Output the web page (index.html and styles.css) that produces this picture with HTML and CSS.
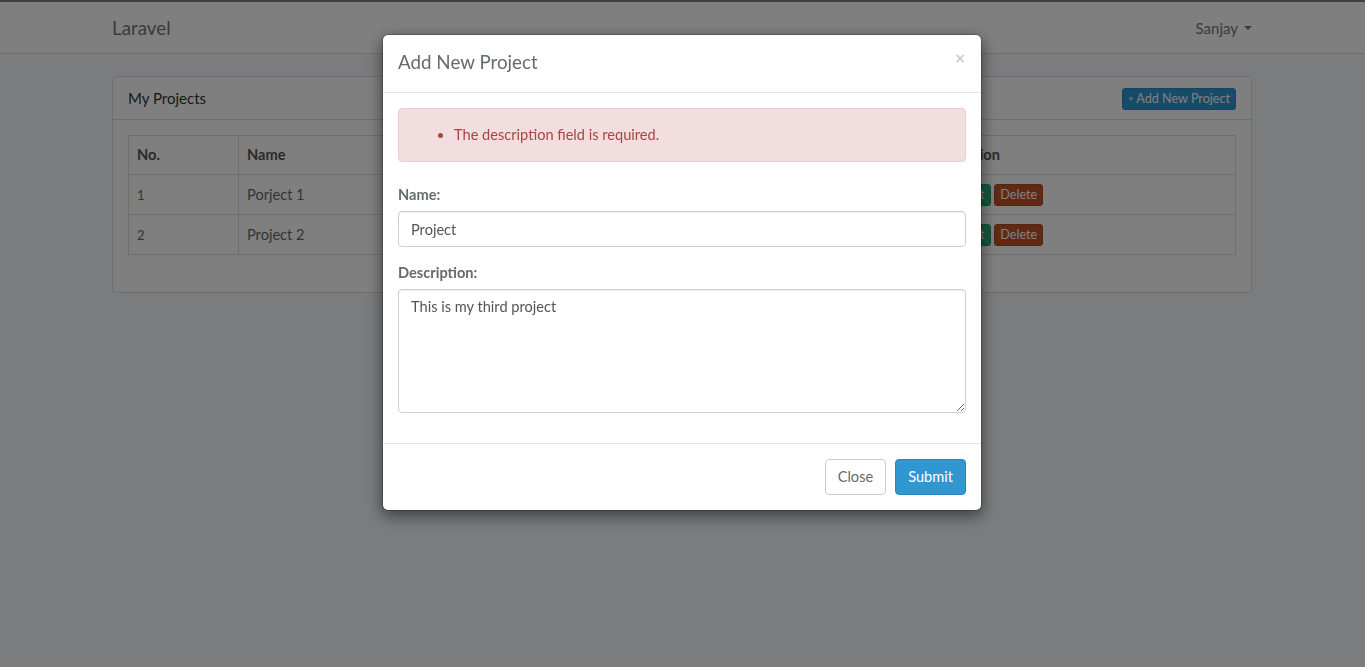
FILE: index.html
```html
<!DOCTYPE html>
<html lang="en">
<head>
<meta charset="utf-8">
<title>Laravel</title>
<link rel="stylesheet" href="styles.css">
</head>
<body>
<div class="topline"></div>
<nav class="navbar">
  <div class="container nav-inner">
    <a class="brand" href="#">Laravel</a>
    <a class="user" href="#">Sanjay <span class="caret"></span></a>
  </div>
</nav>
<main class="container">
  <div class="panel">
    <div class="panel-heading">
      <span>My Projects</span>
      <button class="btn btn-xs btn-primary"><span class="plus">+</span> Add New Project</button>
    </div>
    <div class="panel-body">
      <table class="table">
        <thead>
          <tr><th class="c-no">No.</th><th class="c-name">Name</th><th class="c-desc">Description</th><th>Action</th></tr>
        </thead>
        <tbody>
          <tr><td>1</td><td>Porject 1</td><td>This is my first project</td><td><button class="btn btn-xs btn-success">Edit</button> <button class="btn btn-xs btn-danger">Delete</button></td></tr>
          <tr><td>2</td><td>Project 2</td><td>This is my second project</td><td><button class="btn btn-xs btn-success">Edit</button> <button class="btn btn-xs btn-danger">Delete</button></td></tr>
        </tbody>
      </table>
    </div>
  </div>
</main>
<div class="backdrop"></div>
<div class="modal">
  <div class="modal-dialog">
    <div class="modal-header">
      <h4 class="modal-title">Add New Project</h4>
      <button class="close">&times;</button>
    </div>
    <div class="modal-body">
      <div class="alert">
        <ul><li>The description field is required.</li></ul>
      </div>
      <div class="form-group">
        <label>Name:</label>
        <input class="form-control" type="text" value="Project">
      </div>
      <div class="form-group">
        <label>Description:</label>
        <textarea class="form-control textarea">This is my third project</textarea>
      </div>
    </div>
    <div class="modal-footer">
      <button class="btn btn-default">Close</button>
      <button class="btn btn-primary btn-submit">Submit</button>
    </div>
  </div>
</div>
</body>
</html>
```
FILE: styles.css
```css
* { box-sizing: border-box; }
html, body { margin: 0; padding: 0; }
body {
  font-family: Lato, "Open Sans", sans-serif;
  font-size: 14.6px;
  line-height: 22.4px;
  color: #636b6f;
  background: #f5f8fa;
  height: 667px;
  overflow: hidden;
}
.topline { height: 2px; background: #808080; }
.container {
  width: 1170px;
  margin-left: calc((100% - 1170px) / 2 - 0.5px);
  padding: 0 15px;
}
.navbar {
  background: #fff;
  border-bottom: 1px solid #d3e0e9;
  height: 52px;
  margin-bottom: 22px;
}
.nav-inner { display: flex; justify-content: space-between; align-items: center; height: 51px; }
.brand { font-size: 18.8px; color: #777; text-decoration: none; line-height: 22px; }
.user { color: #777; text-decoration: none; font-size: 15px; display: flex; align-items: center; padding-top: 1px; }
.caret {
  display: inline-block; width: 0; height: 0; margin-left: 6px;
  border-top: 4px solid #777; border-left: 4px solid transparent; border-right: 4px solid transparent;
}
.panel {
  background: #fff;
  border: 1px solid #d3e0e9;
  border-radius: 4px;
}
.panel-heading {
  display: flex; justify-content: space-between; align-items: center;
  padding: 1px 15px 0 15px;
  height: 43px;
  border-bottom: 1px solid #d3e0e9;
  color: #333;
  font-size: 15px;
}
.panel-body { padding: 15px 15px 37px; }
.btn {
  font-family: inherit;
  display: inline-block;
  border: 1px solid transparent;
  border-radius: 4px;
  font-size: 14.6px;
  line-height: 22.4px;
  padding: 6px 12px;
  cursor: pointer;
}
.btn-xs { font-size: 12.6px; line-height: 18px; padding: 1px 5px; border-radius: 3px; height: 22px; }
.btn-primary { background: #3097d1; border-color: #2a88bd; color: #fff; }
.btn-success { background: #2ab27b; border-color: #259d6d; color: #fff; }
.btn-danger { background: #bf5329; border-color: #aa4a24; color: #fff; }
.btn-default { background: #fff; border-color: #ccc; color: #636b6f; }
.plus { font-size: 9px; vertical-align: 1px; }
.table { width: 100%; border-collapse: collapse; }
.table th, .table td {
  border: 1px solid #ddd;
  padding: 8px;
  text-align: left;
  vertical-align: middle;
}
.table th { font-weight: 700; height: 39px; color: #555; }
.table td { height: 40px; }
.table td:first-child { font-size: 13px; }
.c-no { width: 110px; }
.c-name { width: 320px; }
.c-desc { width: 390px; }
.backdrop {
  position: fixed; inset: 0;
  background: rgba(0, 0, 0, 0.5);
}
.modal { position: fixed; inset: 0; }
.modal-dialog {
  width: 600px;
  margin-top: 34px;
  margin-left: calc(50% - 300.5px);
  background: #fff;
  border: 1px solid rgba(0, 0, 0, 0.2);
  border-radius: 6px;
  box-shadow: 0 5px 15px rgba(0, 0, 0, 0.5);
  background-clip: padding-box;
}
.modal-header {
  display: flex; justify-content: space-between; align-items: flex-start;
  padding: 13px 15px 15px;
  border-bottom: 1px solid #e5e5e5;
  height: 58px;
}
.modal-title { margin: 0; font-size: 18.8px; font-weight: 400; line-height: 28px; color: #636b6f; }
.close {
  background: none; border: 0; padding: 0;
  line-height: 1; color: #000; opacity: 0.2;
  font-family: "DejaVu Sans", sans-serif; font-size: 14px; font-weight: 700; margin-top: 3px;
}
.modal-body { padding: 15px; }
.alert {
  background: #f2dede;
  border: 1px solid #ebccd1;
  color: #a94442;
  border-radius: 4px;
  padding: 15px;
  margin-bottom: 22px;
  height: 54px;
}
.alert ul { margin: 0; padding-left: 40px; line-height: 22px; }
.form-group { margin-bottom: 15px; }
.form-group label { display: block; font-weight: 700; margin-bottom: 5px; line-height: 22px; color: #636b6f; }
.form-control {
  display: block; width: 100%;
  height: 36px;
  padding: 6px 12px;
  font-family: inherit; font-size: 14.6px; line-height: 22px;
  color: #555;
  background: #fff;
  border: 1px solid #ccd0d2;
  border-radius: 4px;
  box-shadow: inset 0 1px 1px rgba(0, 0, 0, 0.075);
}
.textarea { height: 124px; resize: vertical; }
.modal-footer {
  display: flex; justify-content: flex-end; gap: 9px;
  padding: 15px;
  border-top: 1px solid #e5e5e5;
}
.modal-footer .btn { height: 36px; }
```
